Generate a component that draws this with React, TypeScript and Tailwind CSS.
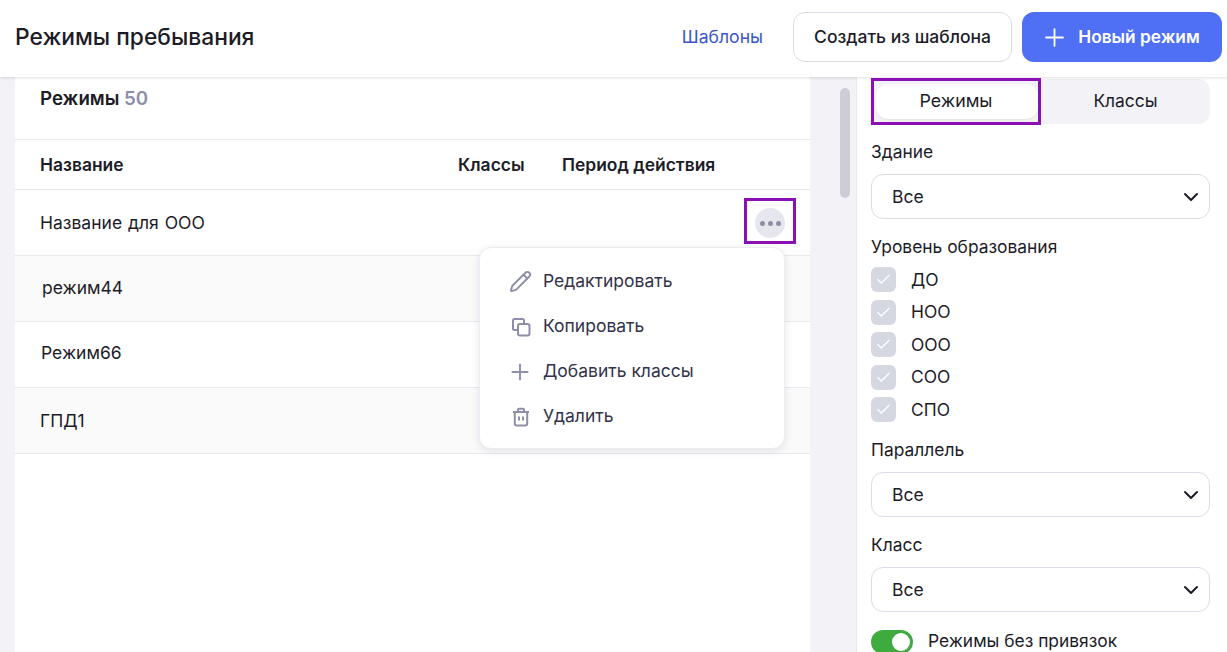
import { Check, ChevronDown, Pencil, Plus } from 'lucide-react';

const rows = [
  { name: 'Название для ООО', cls: 'pl-[25px] bg-white pt-[1px] [word-spacing:1px]' },
  { name: 'режим44', cls: 'pl-[27px] bg-[#fafafb]' },
  { name: 'Режим66', cls: 'pl-[26px] bg-white pb-[2px]' },
  { name: 'ГПД1', cls: 'pl-[25px] bg-[#fafafb] pt-[1px]' },
];

const levels = ['ДО', 'НОО', 'ООО', 'СОО', 'СПО'];

function PencilIcon() {
  return <Pencil className="-m-[1.5px] h-[23px] w-[23px] text-[#8e8ea9]" strokeWidth={2} />;
}

function CopyIcon() {
  return (
    <svg viewBox="0 0 20 20" fill="none" stroke="#8e8ea9" strokeWidth={2} className="h-5 w-5 translate-x-[1px]">
      <path d="M7 13H3.5A1.5 1.5 0 0 1 2 11.5v-8A1.5 1.5 0 0 1 3.5 2h8A1.5 1.5 0 0 1 13 3.5V7" />
      <rect x="7" y="7" width="11.5" height="11.5" rx="2" />
    </svg>
  );
}

function PlusIcon() {
  return <Plus className="-m-[3px] h-[26px] w-[26px] text-[#8e8ea9]" strokeWidth={1.75} />;
}

function TrashIcon() {
  return (
    <svg viewBox="0 0 20 20" fill="none" stroke="#8e8ea9" strokeWidth={2} className="h-5 w-5 translate-x-[1px]">
      <path d="M2 5h16" />
      <path d="M7 5V2.8A1 1 0 0 1 8 1.8h4a1 1 0 0 1 1 1V5" />
      <path d="M3.8 5v11.5a2 2 0 0 0 2 2h8.4a2 2 0 0 0 2-2V5" />
      <path d="M8 9.5v4M12 9.5v4" />
    </svg>
  );
}

const menuItems = [
  { label: 'Редактировать', icon: PencilIcon },
  { label: 'Копировать', icon: CopyIcon },
  { label: 'Добавить классы', icon: PlusIcon },
  { label: 'Удалить', icon: TrashIcon },
];

function Select({ className = '' }: { className?: string }) {
  return (
    <div className={`flex h-[45px] shrink-0 items-center justify-between rounded-xl border border-[#dcdce6] bg-white pl-5 pr-[6px] text-[17.5px] text-[#1c1c28] ${className}`}>
      <span className="pt-[2px]">Все</span>
      <ChevronDown className="h-6 w-6 text-[#1c1c28]" strokeWidth={2} />
    </div>
  );
}

export default function App() {
  return (
    <div className="relative flex h-[652px] w-[1227px] flex-col overflow-hidden bg-[#f2f2f7] font-['Inter',sans-serif] text-[#1c1c28]">
      {/* Header */}
      <header className="relative z-10 flex h-[77px] shrink-0 items-center justify-between bg-white pb-[3px] pl-[15px] pr-[5px] shadow-[0_1px_3px_rgba(0,0,0,0.12)]">
        <h1 className="text-[22.8px] font-medium">Режимы пребывания</h1>
        <div className="flex items-center">
          <span className="mr-[30px] text-[17.6px] text-[#3a56c8]">Шаблоны</span>
          <button className="mr-[10px] h-[50px] w-[219px] rounded-xl border border-[#dcdce6] bg-white text-[17.5px] font-medium">Создать из шаблона</button>
          <button className="flex h-[50px] w-[200px] items-center justify-center gap-[9px] rounded-xl bg-[#4f70f5] pr-[4px] text-[17.3px] font-semibold text-white">
            <Plus className="h-[29px] w-[29px]" strokeWidth={1.5} />
            Новый режим
          </button>
        </div>
      </header>

      <div className="flex min-h-0 flex-1">
        {/* Table */}
        <main className="relative flex-1 pl-[15px]">
          <div className="h-full w-[795px] bg-white">
            <div className="h-[63px] border-b border-[#e8e8ee] pl-[25px] pt-[8px] text-[18.7px] font-semibold">
              Режимы <span className="text-[#8e8ea9]">50</span>
            </div>
            <div className="flex h-[50px] items-center border-b border-[#e8e8ee] pl-[25px] pt-[1px] text-[17.45px] font-semibold">
              <span className="w-[418px]">Название</span>
              <span className="w-[104px]">Классы</span>
              <span>Период действия</span>
            </div>
            {rows.map((row) => (
              <div key={row.name} className={`flex h-[66px] items-center border-b border-[#e8e8ee] text-[17.5px] ${row.cls}`}>
                {row.name}
              </div>
            ))}
          </div>
          {/* Scrollbar */}
          <div className="absolute left-[840px] top-[11px] h-[110px] w-[10px] rounded-full bg-[#cdcdd8]" />
        </main>

        {/* Filters */}
        <aside className="flex w-[371px] shrink-0 flex-col overflow-hidden border-l border-[#e8e8ee] bg-white pl-[14px] pr-[17px] pt-[2px] text-[17.4px]">
          <div className="flex h-[45px] shrink-0 rounded-xl bg-[#f2f2f7] p-[5px]">
            <div className="flex w-[162px] items-center justify-center rounded-xl bg-white pr-[2px] text-[17.8px] shadow-[0_1px_2px_rgba(0,0,0,0.08)]">Режимы</div>
            <div className="flex flex-1 items-center justify-center pl-[8px]">Классы</div>
          </div>

          <label className="mt-[18px] shrink-0 leading-[20px]">Здание</label>
          <Select className="mt-[12px]" />

          <label className="mt-[18px] shrink-0 leading-[20px]">Уровень образования</label>
          <div className="mt-[10px] flex shrink-0 flex-col gap-[7.5px]">
            {levels.map((level) => (
              <div key={level} className="flex h-[25px] items-center gap-[15px]">
                <span className="flex h-[25px] w-[25px] items-center justify-center rounded-[6px] bg-[#d6d8e1]">
                  <Check className="h-[17px] w-[17px] text-white" strokeWidth={1.75} />
                </span>
                <span className="pt-[1px]">{level}</span>
              </div>
            ))}
          </div>

          <label className="mt-[18px] shrink-0 leading-[20px]">Параллель</label>
          <Select className="mt-[12px]" />

          <label className="mt-[18px] shrink-0 leading-[20px]">Класс</label>
          <Select className="mt-[12px]" />

          <div className="mt-[16px] flex shrink-0 items-center gap-[15px]">
            <span className="flex h-[24px] w-[42px] items-center justify-end rounded-full bg-[#3fab3f] pr-[3px]">
              <span className="h-[18px] w-[18px] rounded-full bg-white" />
            </span>
            <span className="pb-[2px]">Режимы без привязок</span>
          </div>
        </aside>
      </div>

      {/* Row menu */}
      <div className="absolute left-[479px] top-[247px] z-20 flex h-[202px] w-[306px] flex-col justify-center gap-[21px] rounded-xl border border-[#ececf2] bg-white pl-[30px] pt-[2px] text-[17.5px] text-[#32324a] shadow-[0_2px_8px_rgba(30,30,60,0.1)]">
        {menuItems.map((item) => {
          const Icon = item.icon;
          return (
            <div key={item.label} className="flex h-[24px] items-center gap-[13px]">
              <Icon />
              {item.label}
            </div>
          );
        })}
      </div>

      {/* Annotated dots button */}
      <div className="absolute left-[744px] top-[198px] z-20 flex h-[46px] w-[52px] items-center justify-center border-[3px] border-[#8a0fb5] pt-[4px]">
        <span className="flex h-[30px] w-[30px] items-center justify-center gap-[3px] rounded-full bg-[#e6e6ee]">
          <i className="h-[5px] w-[5px] rounded-full bg-[#8e8ea9]" />
          <i className="h-[5px] w-[5px] rounded-full bg-[#8e8ea9]" />
          <i className="h-[5px] w-[5px] rounded-full bg-[#8e8ea9]" />
        </span>
      </div>

      {/* Annotated tab */}
      <div className="absolute left-[871px] top-[78px] z-20 h-[47px] w-[170px] border-[3px] border-[#8a0fb5]" />
    </div>
  );
}
